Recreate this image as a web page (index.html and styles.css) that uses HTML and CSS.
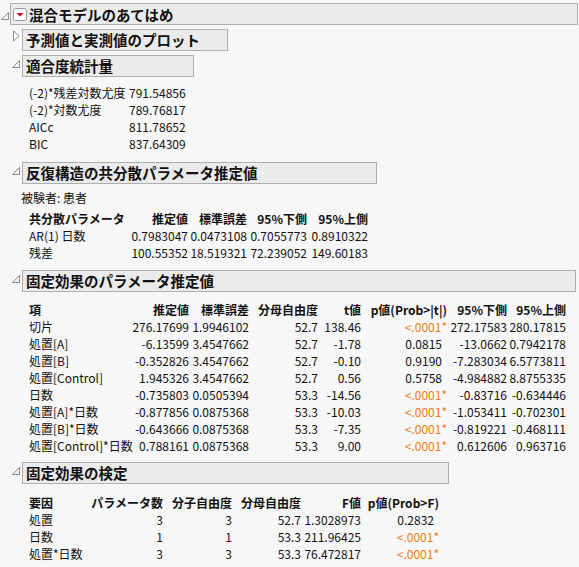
FILE: index.html
```html
<!DOCTYPE html>
<html lang="ja">
<head>
<meta charset="utf-8">
<link rel="stylesheet" href="styles.css">
</head>
<body>
<div class="report">
  <div class="node top">
    <span class="tri"><svg width="10" height="9" viewBox="0 0 10 9"><polygon points="8.5,0.5 8.5,7.5 1.5,7.5" fill="#f4f4f4" stroke="#8a8a8a" stroke-width="1"/></svg></span>
    <div class="box box-top"><span class="menu"><svg width="14" height="13" viewBox="0 0 14 13"><rect x="0.5" y="0.5" width="13" height="12" rx="2" fill="#fff" stroke="#9a9a9a"/><polygon points="3.5,5 10.5,5 7,8.5" fill="#e0001b"/></svg></span>混合モデルのあてはめ</div>
  </div>
  <div class="children">
    <div class="node">
      <span class="tri"><svg width="12" height="12" viewBox="0 0 12 12"><polygon points="3.5,1 9,6 3.5,11" fill="#fff" stroke="#8a8a8a" stroke-width="1"/></svg></span>
      <div class="box w-pred">予測値と実測値のプロット</div>
    </div>
    <div class="node gap4">
      <span class="tri"><svg width="12" height="12" viewBox="0 0 12 12"><polygon points="9.5,4.5 9.5,11.5 2.5,11.5" fill="#f4f4f4" stroke="#8a8a8a" stroke-width="1"/></svg></span>
      <div class="box w-fit">適合度統計量</div>
    </div>
    <div class="grid fit">
      <div>(-2)*残差対数尤度</div><div class="r">791.54856</div>
      <div>(-2)*対数尤度</div><div class="r">789.76817</div>
      <div>AICc</div><div class="r">811.78652</div>
      <div>BIC</div><div class="r">837.64309</div>
    </div>

    <div class="node gap10">
      <span class="tri"><svg width="12" height="12" viewBox="0 0 12 12"><polygon points="9.5,4.5 9.5,11.5 2.5,11.5" fill="#f4f4f4" stroke="#8a8a8a" stroke-width="1"/></svg></span>
      <div class="box w-cov">反復構造の共分散パラメータ推定値</div>
    </div>
    <div class="subject">被験者: 患者</div>
    <div class="grid cov">
      <div class="h">共分散パラメータ</div><div class="h r">推定値</div><div class="h r">標準誤差</div><div class="h r">95%下側</div><div class="h r">95%上側</div>
      <div>AR(1) 日数</div><div class="r">0.7983047</div><div class="r">0.0473108</div><div class="r">0.7055773</div><div class="r">0.8910322</div>
      <div>残差</div><div class="r">100.55352</div><div class="r">18.519321</div><div class="r">72.239052</div><div class="r">149.60183</div>
    </div>

    <div class="node gap9">
      <span class="tri"><svg width="12" height="12" viewBox="0 0 12 12"><polygon points="9.5,4.5 9.5,11.5 2.5,11.5" fill="#f4f4f4" stroke="#8a8a8a" stroke-width="1"/></svg></span>
      <div class="box w-fixed">固定効果のパラメータ推定値</div>
    </div>
    <div class="grid fixed">
      <div class="h">項</div><div class="h r">推定値</div><div class="h r">標準誤差</div><div class="h r">分母自由度</div><div class="h r">t値</div><div class="h r">p値(Prob&gt;|t|)</div><div class="h r">95%下側</div><div class="h r">95%上側</div>
      <div>切片</div><div class="r">276.17699</div><div class="r">1.9946102</div><div class="r">52.7</div><div class="r">138.46</div><div class="r sig">&lt;.0001*</div><div class="r">272.17583</div><div class="r">280.17815</div>
      <div>処置[A]</div><div class="r">-6.13599</div><div class="r">3.4547662</div><div class="r">52.7</div><div class="r">-1.78</div><div class="r p">0.0815</div><div class="r">-13.0662</div><div class="r">0.7942178</div>
      <div>処置[B]</div><div class="r">-0.352826</div><div class="r">3.4547662</div><div class="r">52.7</div><div class="r">-0.10</div><div class="r p">0.9190</div><div class="r">-7.283034</div><div class="r">6.5773811</div>
      <div>処置[Control]</div><div class="r">1.945326</div><div class="r">3.4547662</div><div class="r">52.7</div><div class="r">0.56</div><div class="r p">0.5758</div><div class="r">-4.984882</div><div class="r">8.8755335</div>
      <div>日数</div><div class="r">-0.735803</div><div class="r">0.0505394</div><div class="r">53.3</div><div class="r">-14.56</div><div class="r sig">&lt;.0001*</div><div class="r">-0.83716</div><div class="r">-0.634446</div>
      <div>処置[A]*日数</div><div class="r">-0.877856</div><div class="r">0.0875368</div><div class="r">53.3</div><div class="r">-10.03</div><div class="r sig">&lt;.0001*</div><div class="r">-1.053411</div><div class="r">-0.702301</div>
      <div>処置[B]*日数</div><div class="r">-0.643666</div><div class="r">0.0875368</div><div class="r">53.3</div><div class="r">-7.35</div><div class="r sig">&lt;.0001*</div><div class="r">-0.819221</div><div class="r">-0.468111</div>
      <div>処置[Control]*日数</div><div class="r">0.788161</div><div class="r">0.0875368</div><div class="r">53.3</div><div class="r">9.00</div><div class="r sig">&lt;.0001*</div><div class="r">0.612606</div><div class="r">0.963716</div>
    </div>

    <div class="node gap8">
      <span class="tri"><svg width="12" height="12" viewBox="0 0 12 12"><polygon points="9.5,4.5 9.5,11.5 2.5,11.5" fill="#f4f4f4" stroke="#8a8a8a" stroke-width="1"/></svg></span>
      <div class="box w-test">固定効果の検定</div>
    </div>
    <div class="grid test">
      <div class="h">要因</div><div class="h r">パラメータ数</div><div class="h r">分子自由度</div><div class="h r">分母自由度</div><div class="h r">F値</div><div class="h r">p値(Prob&gt;F)</div>
      <div>処置</div><div class="r">3</div><div class="r">3</div><div class="r">52.7</div><div class="r">1.3028973</div><div class="r p">0.2832</div>
      <div>日数</div><div class="r">1</div><div class="r">1</div><div class="r">53.3</div><div class="r">211.96425</div><div class="r sig">&lt;.0001*</div>
      <div>処置*日数</div><div class="r">3</div><div class="r">3</div><div class="r">53.3</div><div class="r">76.472817</div><div class="r sig">&lt;.0001*</div>
    </div>
  </div>
</div>
</body>
</html>
```

FILE: styles.css
```css
html, body {
  margin: 0;
  padding: 0;
  background: #f7f7f7;
}
body {
  font-family: "Noto Sans CJK JP", sans-serif;
  font-size: 12px;
  color: #111;
}
.report {
  padding-top: 3px;
}
.node {
  display: flex;
  align-items: flex-start;
}
.tri {
  display: block;
  flex: 0 0 12px;
  width: 12px;
  height: 22px;
}
.node.top .tri {
  flex-basis: 10px;
  width: 10px;
  padding-top: 9px;
  height: 13px;
}
.tri svg {
  display: block;
}
.node:not(.top) .tri {
  padding-top: 1px;
  height: 21px;
}
.box {
  box-sizing: border-box;
  height: 22px;
  background: #ebebeb;
  border: 1px solid #aeaeae;
  font-weight: bold;
  font-size: 14.5px;
  line-height: 19px;
  padding-left: 3px;
  color: #111;
  white-space: nowrap;
}
.box-top {
  width: 568px;
  display: flex;
  align-items: center;
  padding-left: 2px;
}
.menu {
  display: block;
  width: 14px;
  height: 13px;
  margin-right: 2px;
}
.menu svg { display: block; }
.children {
  margin-top: 4px;
  padding-left: 10px;
}
.gap4 { margin-top: 4px; }
.gap10 { margin-top: 10px; }
.gap9 { margin-top: 9px; }
.gap8 { margin-top: 8px; }
.w-pred { width: 206px; }
.w-fit { width: 172px; }
.w-cov { width: 355px; }
.w-fixed { width: 554px; }
.w-test { width: 427px; }

.grid {
  display: grid;
  grid-auto-rows: 17px;
  line-height: 17px;
  margin-left: 19px;
  white-space: nowrap;
}
.grid .r { text-align: right; }
.grid .h { font-weight: bold; }
.fit {
  margin-top: 7px;
  grid-template-columns: 100px 55px;
}
.subject {
  margin-top: 5px;
  margin-left: 11px;
  line-height: 17px;
}
.cov {
  margin-top: 4px;
  grid-template-columns: 100px 59px 59px 60px 61px;
}
.fixed {
  margin-top: 9px;
  grid-template-columns: 100px 60px 60px 69px 43px 86px 60px 59px;
}
.test {
  margin-top: 10px;
  grid-template-columns: 60px 74px 69px 69px 60px 78px;
}
.sig { color: #ee7b1d; }
.p { padding-right: 5px; }
```
